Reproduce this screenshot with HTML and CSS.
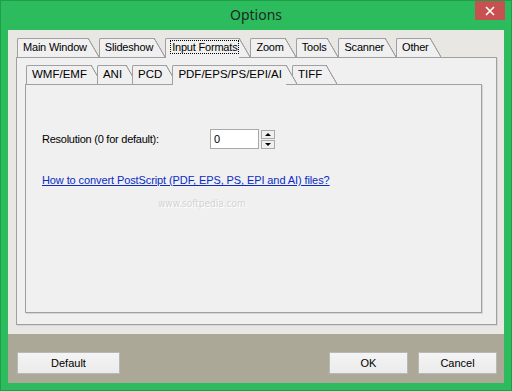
FILE: index.html
```html
<!DOCTYPE html>
<html lang="en">
<head>
    <meta charset="UTF-8">
    <title>Options</title>
    <link rel="stylesheet" href="styles.css">
</head>
<body>
    <div class="window">
        <!-- Title bar -->
        <div class="titlebar">
            <span class="title">Options</span>
            <div class="close">
                <svg width="10" height="10" viewBox="0 0 10 10">
                    <path d="M1 1 L9 9 M9 1 L1 9" stroke="#fff" stroke-width="1.6" fill="none"/>
                </svg>
            </div>
        </div>

        <div class="client">
            <div class="main">
                <!-- Outer tabs -->
                <div class="tabs">
                    <div class="tab">Main Window</div>
                    <div class="tab">Slideshow</div>
                    <div class="tab active"><span class="focus">Input Formats</span></div>
                    <div class="tab">Zoom</div>
                    <div class="tab">Tools</div>
                    <div class="tab">Scanner</div>
                    <div class="tab">Other</div>
                </div>
                <div class="panel outer">
                    <!-- Inner tabs -->
                    <div class="tabs inner-tabs">
                        <div class="tab">WMF/EMF</div>
                        <div class="tab">ANI</div>
                        <div class="tab">PCD</div>
                        <div class="tab active">PDF/EPS/PS/EPI/AI</div>
                        <div class="tab">TIFF</div>
                    </div>
                    <div class="panel inner">
                        <div class="field-row">
                            <label class="field-label" for="resolution">Resolution (0 for default):</label>
                            <input type="text" id="resolution" class="spin-input" value="0">
                            <div class="spin">
                                <div class="spin-btn"><span class="arrow up"></span></div>
                                <div class="spin-btn"><span class="arrow down"></span></div>
                            </div>
                        </div>
                        <a class="link" href="#">How to convert PostScript (PDF, EPS, PS, EPI and AI) files?</a>
                        <div class="watermark">www.softpedia.com</div>
                    </div>
                </div>
            </div>

            <!-- Buttons -->
            <div class="buttonbar">
                <button class="btn btn-default">Default</button>
                <div class="spacer"></div>
                <button class="btn">OK</button>
                <button class="btn">Cancel</button>
            </div>
        </div>
    </div>
</body>
</html>
```

FILE: styles.css
```css
* {
    margin: 0;
    padding: 0;
    box-sizing: border-box;
}

body {
    font-family: 'Liberation Sans', Arial, sans-serif;
    font-size: 11px;
    color: #000;
    background: #2cbb5d;
}

.window {
    width: 512px;
    height: 391px;
    background: #2cbb5d;
    border: 1px solid #1f9e4a;
    display: flex;
    flex-direction: column;
}

/* Title bar */
.titlebar {
    position: relative;
    height: 29px;
    text-align: center;
}

.title {
    display: inline-block;
    font-family: 'Noto Sans', sans-serif;
    font-size: 14px;
    line-height: 28px;
    color: #1d2a22;
}

.close {
    position: absolute;
    top: 0;
    right: 6px;
    width: 30px;
    height: 19px;
    background: #c75050;
    display: flex;
    align-items: center;
    justify-content: center;
}

/* Client area */
.client {
    flex: 1;
    margin: 0 7px 7px 7px;
    background: #e8e7e3;
    display: flex;
    flex-direction: column;
}

.main {
    padding: 8px 7px 9px 8px;
}

/* Tabs */
.tabs {
    display: flex;
    height: 19px;
    padding-left: 1px;
}

.tab {
    position: relative;
    height: 19px;
    padding: 0 1px 0 5px;
    margin-right: 11px;
    border-top: 1px solid #a0a0a0;
    border-left: 1px solid #a0a0a0;
    border-top-left-radius: 2px;
    background: #f0f0f0;
    line-height: 17px;
    letter-spacing: -0.2px;
    white-space: nowrap;
}

.tab::after {
    content: '';
    position: absolute;
    top: -1px;
    right: -11px;
    width: 11px;
    height: 19px;
    background: linear-gradient(to top right, #f0f0f0 calc(50% - 0.8px), #a0a0a0 calc(50% - 0.3px), #a0a0a0 calc(50% + 0.3px), transparent calc(50% + 0.8px));
}

.tab.active {
    height: 20px;
    margin-bottom: -1px;
    z-index: 1;
}

.focus {
    outline: 1px dotted #000;
    outline-offset: 0;
    padding: 0 1px;
}

.inner-tabs .tab {
    font-size: 11.5px;
    letter-spacing: 0;
    padding: 0 4px 0 5px;
    margin-right: 6px;
}

/* Panels */
.panel {
    border: 1px solid #a0a0a0;
    background: #f0f0f0;
    box-shadow: 1px 1px 0 #d6d6d6;
}

.outer {
    height: 268px;
    padding: 7px 14px 11px 8px;
}

.inner {
    position: relative;
    height: 229px;
    padding: 44px 16px 0 16px;
}

.field-row {
    display: flex;
    align-items: center;
    height: 20px;
}

.field-label {
    width: 168px;
    letter-spacing: -0.25px;
}

.spin-input {
    width: 49px;
    height: 20px;
    border: 1px solid #a9a9a9;
    background: #fff;
    font-family: inherit;
    font-size: 11px;
    padding: 0 3px;
    outline: none;
}

.spin {
    margin-left: 2px;
    display: flex;
    flex-direction: column;
    gap: 1px;
}

.spin-btn {
    width: 14px;
    height: 9px;
    border: 1px solid #a8a8a8;
    background: #f0f0f0;
    display: flex;
    align-items: center;
    justify-content: center;
}

.arrow {
    width: 0;
    height: 0;
    border-left: 3px solid transparent;
    border-right: 3px solid transparent;
}

.arrow.up {
    border-bottom: 3px solid #000;
}

.arrow.down {
    border-top: 3px solid #000;
}

.link {
    display: inline-block;
    margin-top: 25px;
    color: #0a2bc4;
    text-decoration: underline;
    letter-spacing: -0.1px;
}

.watermark {
    position: absolute;
    left: 132px;
    top: 113px;
    font-family: 'DejaVu Sans Condensed', 'DejaVu Sans', sans-serif;
    font-size: 10px;
    color: #d4d4d4;
    text-shadow: 1px 1px 0 #fff;
}

/* Button bar */
.buttonbar {
    flex: 1;
    background: #aba898;
    display: flex;
    align-items: flex-start;
    padding: 18px 7px 0 9px;
    gap: 10px;
}

.spacer {
    flex: 1;
}

.btn {
    width: 79px;
    height: 22px;
    border: 1px solid #b8b8b8;
    background: linear-gradient(#f4f4f4, #ebebeb);
    font-family: inherit;
    font-size: 11px;
    color: #000;
}

.btn-default {
    width: 103px;
}
```
